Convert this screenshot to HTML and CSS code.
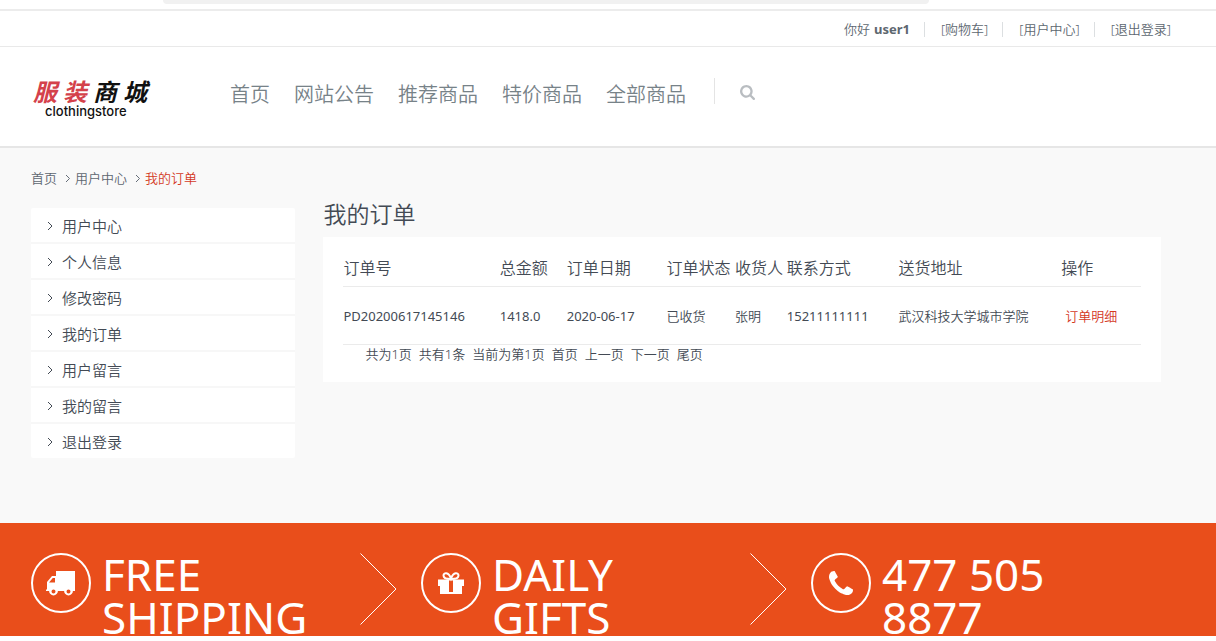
FILE: index.html
```html
<!DOCTYPE html>
<html lang="zh-CN">
<head>
<meta charset="utf-8">
<meta name="viewport" content="width=device-width, initial-scale=1">
<title>我的订单</title>
<link rel="stylesheet" href="styles.css">
</head>
<body>
<div class="strip"><div class="strip-bar"></div></div>
<div class="topbar">
  <ul class="toplinks">
    <li>你好 <strong>user1</strong></li>
    <li><a href="#">[购物车]</a></li>
    <li><a href="#">[用户中心]</a></li>
    <li><a href="#">[退出登录]</a></li>
  </ul>
</div>
<header class="header">
  <a class="logo" href="#">
    <span class="logo-cn"><span class="logo-red">服</span><span class="logo-red">装</span><span>商</span><span>城</span></span>
    <span class="logo-en">clothingstore</span>
  </a>
  <nav class="nav">
    <a href="#">首页</a>
    <a href="#">网站公告</a>
    <a href="#">推荐商品</a>
    <a href="#">特价商品</a>
    <a href="#">全部商品</a>
  </nav>
  <button class="search" type="button" aria-label="搜索">
    <svg viewBox="0 0 1664 1664" width="15" height="15"><path d="M1152 704q0-185-131.500-316.500t-316.500-131.500-316.500 131.500-131.500 316.500 131.500 316.500 316.500 131.500 316.500-131.500 131.500-316.500zm512 832q0 52-38 90t-90 38q-54 0-90-38l-343-342q-179 124-399 124-143 0-273.500-55.500t-225-150-150-225-55.500-273.500 55.500-273.500 150-225 225-150 273.500-55.500 273.500 55.500 225 150 150 225 55.500 273.500q0 220-124 399l343 343q37 37 37 90z"/></svg>
  </button>
</header>
<main class="page">
  <nav class="crumbs">
    <a href="#">首页</a>
    <svg class="chev" viewBox="0 0 6 9"><path d="M1 1l3.500 3.500L1 8"/></svg>
    <a href="#">用户中心</a>
    <svg class="chev" viewBox="0 0 6 9"><path d="M1 1l3.500 3.500L1 8"/></svg>
    <span class="current">我的订单</span>
  </nav>
  <div class="columns">
    <ul class="menu">
      <li><a href="#"><svg viewBox="0 0 7 11"><path d="M1 1l4 4-4 4"/></svg>用户中心</a></li>
      <li><a href="#"><svg viewBox="0 0 7 11"><path d="M1 1l4 4-4 4"/></svg>个人信息</a></li>
      <li><a href="#"><svg viewBox="0 0 7 11"><path d="M1 1l4 4-4 4"/></svg>修改密码</a></li>
      <li><a href="#"><svg viewBox="0 0 7 11"><path d="M1 1l4 4-4 4"/></svg>我的订单</a></li>
      <li><a href="#"><svg viewBox="0 0 7 11"><path d="M1 1l4 4-4 4"/></svg>用户留言</a></li>
      <li><a href="#"><svg viewBox="0 0 7 11"><path d="M1 1l4 4-4 4"/></svg>我的留言</a></li>
      <li><a href="#"><svg viewBox="0 0 7 11"><path d="M1 1l4 4-4 4"/></svg>退出登录</a></li>
    </ul>
    <section class="orders">
      <h1>我的订单</h1>
      <div class="card">
        <table>
          <colgroup>
            <col class="c-no"><col class="c-sum"><col class="c-date"><col class="c-state"><col class="c-name"><col class="c-phone"><col class="c-addr"><col class="c-act">
          </colgroup>
          <thead>
            <tr><th>订单号</th><th>总金额</th><th>订单日期</th><th>订单状态</th><th>收货人</th><th>联系方式</th><th>送货地址</th><th>操作</th></tr>
          </thead>
          <tbody>
            <tr><td class="num">PD20200617145146</td><td class="num">1418.0</td><td class="num">2020-06-17</td><td>已收货</td><td>张明</td><td class="num">15211111111</td><td>武汉科技大学城市学院</td><td class="action"><a href="#">订单明细</a></td></tr>
          </tbody>
        </table>
        <div class="pager">
          <span>共为1页</span><span>共有1条</span><span>当前为第1页</span><a href="#">首页</a><a href="#">上一页</a><a href="#">下一页</a><a href="#">尾页</a>
        </div>
      </div>
    </section>
  </div>
</main>
<section class="band">
  <div class="features">
    <div class="feature">
      <span class="ring"><svg viewBox="0 0 30 25" width="30" height="25"><path fill-rule="evenodd" d="M10 0H29V20H26.900A4.400 4.400 0 0 1 18.100 20H11.900A4.400 4.400 0 0 1 3.100 20H0V18.500H1V11L6 5H10ZM9 7H6.800L3 11.500H9ZM5.500 20.500a2 2 0 1 0 4 0a2 2 0 1 0-4 0ZM20.500 20.500a2 2 0 1 0 4 0a2 2 0 1 0-4 0Z"/></svg></span>
      <p>FREE SHIPPING</p>
      <svg class="arrow" viewBox="0 0 37 72"><path d="M.5.5L36 36L.5 71.500"/></svg>
    </div>
    <div class="feature">
      <span class="ring"><svg viewBox="0 0 26 24" width="26" height="24"><path fill-rule="evenodd" d="M0 8.500H26V15H24V23H2V15H0ZM11 9.500V21H15V9.500Z"/><path class="bow" d="M12.500 8C10 8 5.500 7.500 5.500 4.500S10.500 .5 13 7.500C15.500.5 20.500 1.500 20.500 4.500S16 8 13.500 8"/></svg></span>
      <p>DAILY<br>GIFTS</p>
      <svg class="arrow" viewBox="0 0 37 72"><path d="M.5.5L36 36L.5 71.500"/></svg>
    </div>
    <div class="feature">
      <span class="ring"><svg viewBox="192 128 1408 1408" width="24" height="24"><path d="M1600 1240q0 27-10 70.500t-21 68.500q-21 50-122 106-94 51-186 51-27 0-53-3.500t-57-12.500-47-14.500-55.500-20.500-49.500-18q-98-35-175-83-127-79-264-216t-216-264q-48-77-83-175-3-9-18-49.500t-20.500-55.500-14.500-47-12.500-57-3.500-53q0-92 51-186 56-101 106-122 25-11 68.500-21t70.500-10q14 0 21 3 18 6 53 76 11 19 30 54t35 63.500 31 53.500q3 4 17.500 25t21.500 35.500 7 28.500q0 20-28.500 50t-62 55-62 53-28.500 46q0 9 5 22.500t8.500 20.500 14 24 11.500 19q76 137 174 235t235 174q2 1 19 11.500t24 14 20.500 8.500 22.500 5q18 0 46-28.500t53-62 55-62 50-28.500q14 0 28.500 7t35.500 21.500 25 17.500q25 15 53.500 31t63.500 35 54 30q70 35 76 53 3 7 3 21z"/></svg></span>
      <p>477 505 8877</p>
    </div>
  </div>
</section>
</body>
</html>
```
FILE: styles.css
```css
* { box-sizing: border-box; }
body {
  margin: 0;
  background: #fff;
  color: #434a54;
  font: 350 13px/20px "Noto Sans", "Noto Sans CJK SC", sans-serif;
}
a { color: inherit; text-decoration: none; }
ul { list-style: none; margin: 0; padding: 0; }
svg { display: block; flex: none; }

.strip { height: 11px; border-bottom: 2px solid #ececec; }
.strip-bar { width: 63%; height: 4px; margin-left: 163px; background: #f1f1f1; border-radius: 0 0 4px 4px; }

.topbar { padding: 8px 45px 7px 31px; border-bottom: 1px solid #e9e9e9; color: #5d6770; }
.toplinks { display: flex; justify-content: flex-end; align-items: center; }
.toplinks li { display: flex; align-items: center; gap: 4px; }
.toplinks li + li::before { content: ""; width: 1px; height: 15px; margin: 0 12px 0 14px; background: #dcdfe1; }
.toplinks strong { font-weight: 700; }

.header { display: flex; align-items: flex-start; padding: 31px 31px 28px; border-bottom: 2px solid #e6e6e6; }
.logo { display: flex; flex-direction: column; width: 199px; padding-left: 2px; color: #111; }
.logo-cn { display: flex; gap: 6px; font: italic 700 24px/26px "Noto Sans CJK SC", sans-serif; }
.logo-red { color: #d4414b; }
.logo-en { padding-left: 12px; font: 500 13px/14px Inter, sans-serif; }
.nav { display: flex; gap: 24px; color: #778288; font-size: 20px; line-height: 34px; }
.search { display: flex; margin-left: 28px; padding: 7px 0 4px 25px; border: 0; border-left: 1px solid #e4e4e4; background: none; fill: #b9bdc1; }

.page { background: #f9f9f9; padding: 20px 55px 65px 31px; }
.crumbs { display: flex; align-items: center; color: #5d6670; }
.crumbs .current { color: #d4391f; }
.chev { width: 6px; height: 9px; margin: 0 4px 0 8px; fill: none; stroke: #656d78; }
.columns { display: flex; align-items: flex-start; gap: 28px; padding-top: 8px; }
.menu { flex: 0 0 23.4%; margin-top: 12px; border-radius: 2px; overflow: hidden; }
.menu li + li { border-top: 2px solid #f7f7f7; }
.menu a { display: flex; align-items: center; height: 34px; padding: 2px 16px 0; background: #fff; font-size: 15px; }
.menu svg { width: 7px; height: 11px; margin-right: 8px; fill: none; stroke: #434a54; }
.orders { flex: 1; min-width: 0; }
.orders h1 { margin: 0 0 4px; font-size: 23px; line-height: 37px; font-weight: 350; }
.card { background: #fff; padding: 12px 20px 19px; }
table { width: 100%; border-collapse: collapse; table-layout: fixed; }
th, td { padding: 1px 0 0; text-align: left; white-space: nowrap; border-bottom: 1px solid #ebebeb; }
th { height: 37px; font-size: 16px; font-weight: 350; }
td { height: 58px; }
.num { font-weight: 400; }
.action { padding-left: 4px; color: #d4391f; }
.c-no { width: 19.6%; }
.c-sum { width: 8.4%; }
.c-date { width: 12.5%; }
.c-state { width: 8.6%; }
.c-name { width: 6.5%; }
.c-phone { width: 14%; }
.c-addr { width: 20.4%; }
.c-act { width: 10%; }
.pager { display: flex; gap: 7px; padding-left: 22px; line-height: 18px; }

.band { display: flex; padding: 30px 15px 0 31px; background: #e94e1b; color: #fff; }
.features { flex: 1; display: grid; grid-template-columns: repeat(3, 1fr); margin-bottom: -3px; }
.feature { display: flex; align-items: flex-start; }
.ring { display: flex; flex: none; align-items: center; justify-content: center; width: 60px; height: 60px; border: 2px solid #fff; border-radius: 50%; fill: #fff; }
.feature p { flex: 0 1 230px; margin: 0 0 0 11px; font-size: 44px; line-height: 43px; font-weight: 400; }
.arrow { width: 37px; height: 72px; margin-left: 28px; fill: none; stroke: #fff; }
.bow { fill: none; stroke: #fff; stroke-width: 2; }
```
